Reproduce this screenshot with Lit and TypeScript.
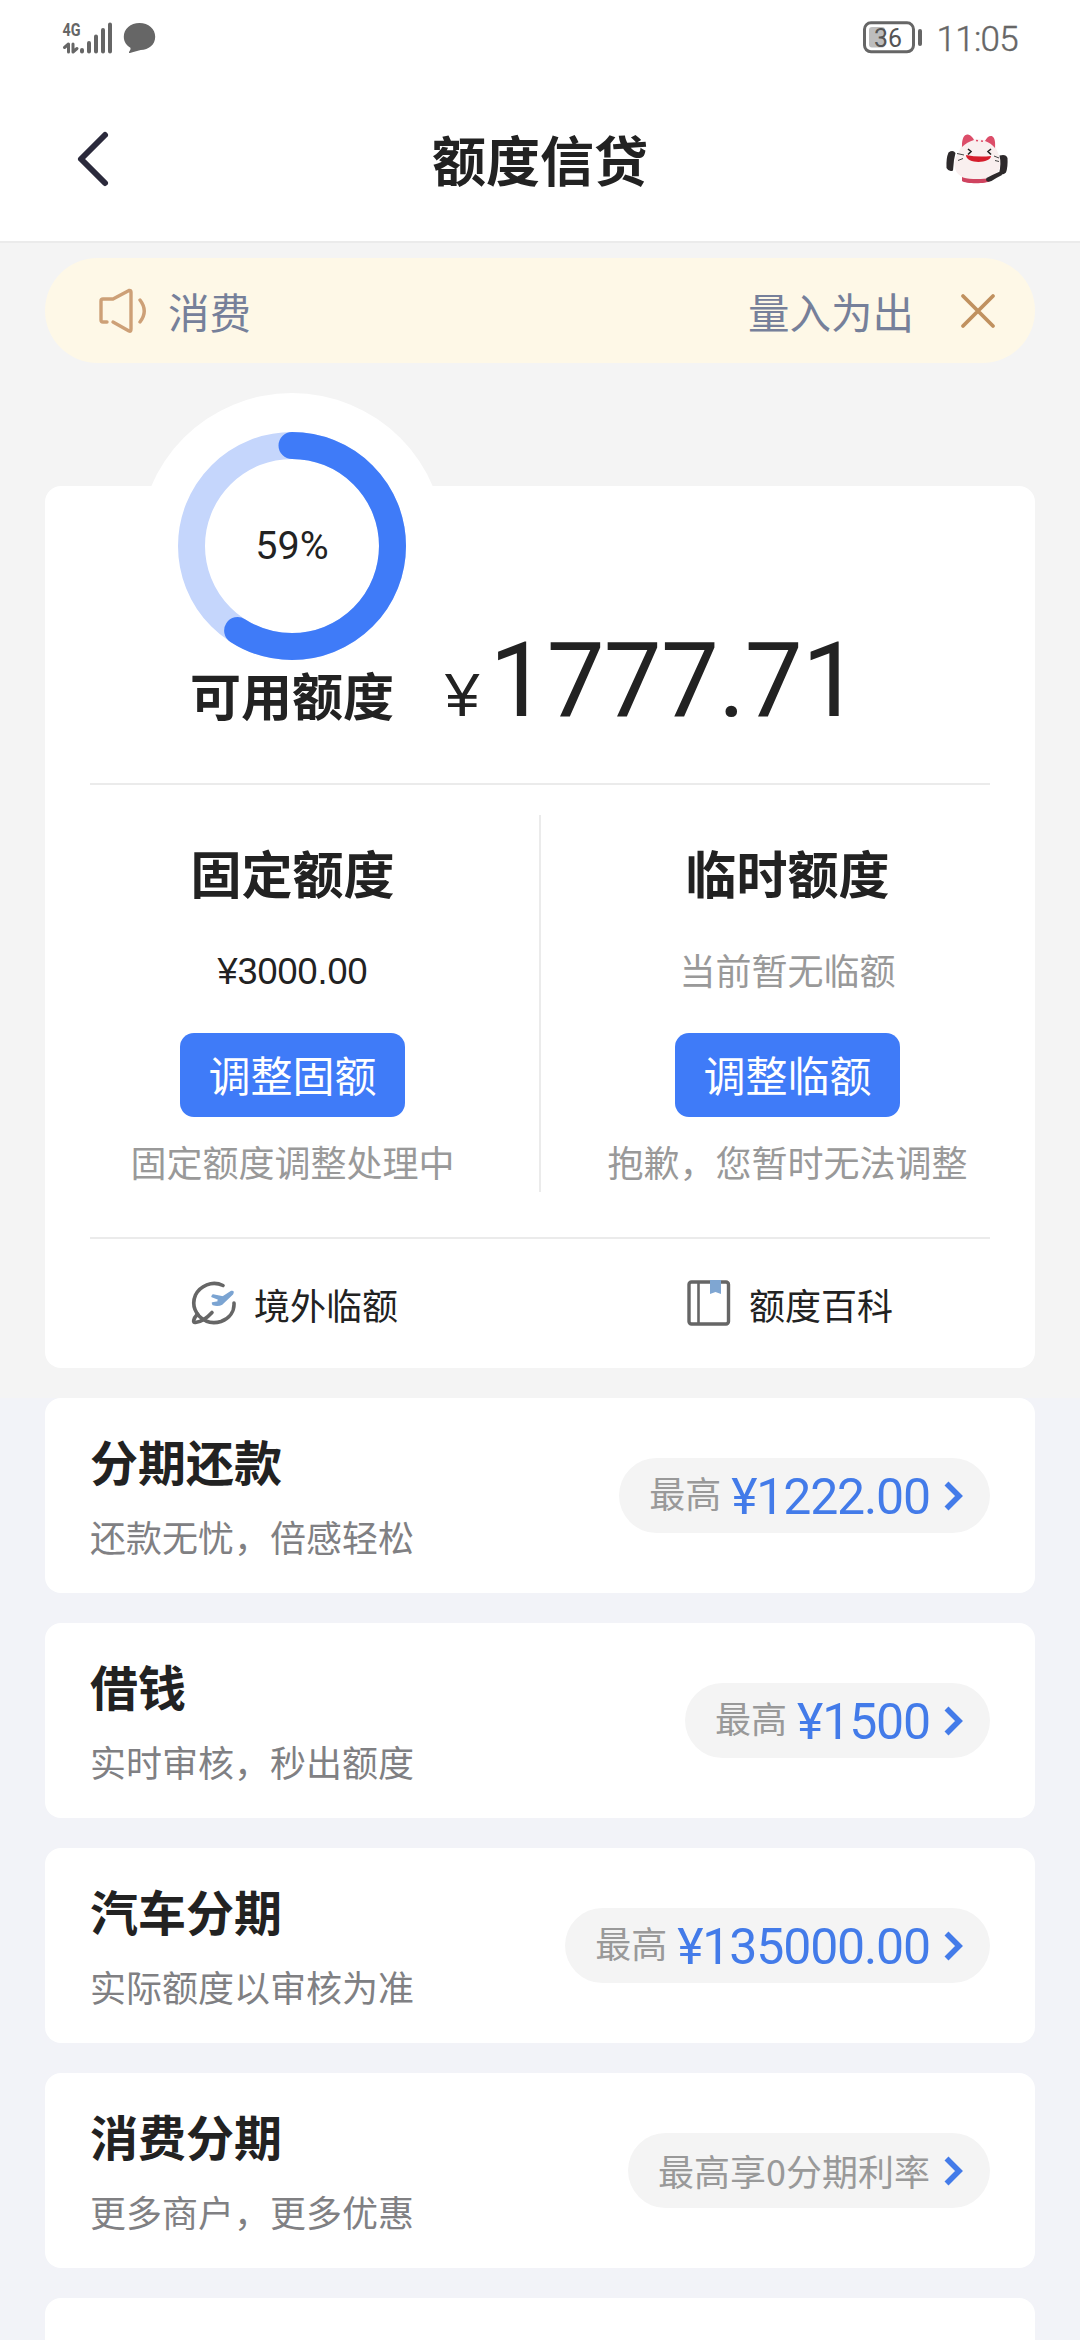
import { LitElement, html, css, nothing } from "lit";
import { customElement, property } from "lit/decorators.js";

interface Offer {
  title: string;
  note: string;
  hint: string;
  amount?: string;
}

const OFFERS: Offer[] = [
  { title: "分期还款", note: "还款无忧，倍感轻松", hint: "最高", amount: "¥1222.00" },
  { title: "借钱", note: "实时审核，秒出额度", hint: "最高", amount: "¥1500" },
  { title: "汽车分期", note: "实际额度以审核为准", hint: "最高", amount: "¥135000.00" },
  { title: "消费分期", note: "更多商户，更多优惠", hint: "最高享0分期利率" },
];

@customElement("status-bar")
class StatusBar extends LitElement {
  static styles = css`
    :host {
      display: flex;
      justify-content: space-between;
      height: 76px;
      padding: 0 62px 0 56px;
      box-sizing: border-box;
      color: #666;
      font-family: Roboto, sans-serif;
    }
    .left { margin-top: 12px; }
    .right { display: flex; margin-top: 20px; gap: 13px; }
    .time {
      font-size: 35px;
      line-height: 39px;
      font-weight: 300;
      letter-spacing: -0.7px;
      -webkit-text-stroke: 0.4px #666;
    }
    svg { display: block; }
    .net { font: 700 19px Roboto, sans-serif; fill: #666; }
    .level { font: 400 26px Roboto, sans-serif; fill: #555; }
  `;
  render() {
    return html`
      <div class="left">
        <svg width="102" height="48" viewBox="56 12 102 48">
          <text class="net" x="62.5" y="36" textLength="18" lengthAdjust="spacingAndGlyphs">4G</text>
          <g stroke="#666" fill="none" stroke-linecap="round" stroke-linejoin="round">
            <path stroke-width="3" d="M68.500 52V44L64.500 47.500M73 44V52L77 48.500" />
            <path stroke-width="4" d="M82 50V51.500M89 43V51.500M96 36.500V51.500M103 30V51.500M110 24.500V51.500" />
          </g>
          <path fill="#666" d="M139.5 23c9 0 15.7 6 15.700 13.800 0 8-6.500 13-14.500 13.200-3.600.8-7.500 2.300-10.700 3-1.100.2-1.300-.7-.7-1.500 1-1.200 1.500-2.400 1.100-3.700-4-2.300-6.600-6-6.600-11C123.800 29 130.500 23 139.500 23z" />
        </svg>
      </div>
      <div class="right">
        <svg width="61" height="36" viewBox="861 20 61 36">
          <rect x="868" y="27" width="16" height="20.500" rx="3" fill="#bdbdbd" />
          <rect x="863.500" y="22.800" width="49" height="29" rx="6.500" fill="none" stroke="#666" stroke-width="3" />
          <rect x="917" y="29" width="4" height="17" rx="2" fill="#666" />
          <text class="level" x="873" y="47" textLength="28" lengthAdjust="spacingAndGlyphs">36</text>
        </svg>
        <span class="time">11:05</span>
      </div>
    `;
  }
}

@customElement("nav-header")
class NavHeader extends LitElement {
  static styles = css`
    :host {
      display: grid;
      grid-template-columns: 200px 1fr 200px;
      align-items: center;
      height: 167px;
      box-sizing: border-box;
      border-bottom: 2px solid #ebebeb;
    }
    .back { margin-left: 76px; display: block; }
    .title {
      margin: 0;
      text-align: center;
      font-size: 54px;
      line-height: 60px;
      font-weight: 700;
      color: #222;
    }
    .mascot { margin-left: 64px; display: block; }
  `;
  render() {
    return html`
      <svg class="back" width="36" height="60" viewBox="76 129 36 60">
        <path d="M105 135L81 159L105 183" fill="none" stroke="#2b2a3c" stroke-width="6" stroke-linecap="round" stroke-linejoin="round" />
      </svg>
      <h1 class="title">额度信贷</h1>
      <svg class="mascot" width="68" height="56" viewBox="944 131 68 56">
        <path d="M962 176h28v5c-3 3-25 3-28 0z" fill="#cf4460" />
        <path d="M963 142Q978 136 994 143C996 149 998 152 1000 158C1002 168 997 176 990 178C982 179.500 970 179.500 963 177.500C954 173 953 164 956 157C959 151 961 148 963 142z" fill="#f9efef" />
        <path d="M962 145C962 139 964 134 968 134.500C971 135 973 138 974 140Q967 142 962 147zM985 141C987 137 990 135 992.500 136.500C995 138 995.500 143 995 148Q991 143 985 141z" fill="#dc4d69" />
        <path d="M966 155q12 2.500 25 1c0 7.500-25 8.500-25-1z" fill="#d51d2c" />
        <path d="M968 149l3 2.500-3 3M991 149l-3 2.500 3 3" fill="none" stroke="#222" stroke-width="1.600" />
        <path d="M964 155l-7-1.500M963 158.500l-5 2M994 156l5 2M995 160.500l4 1" fill="none" stroke="#444" stroke-width="1" />
        <path d="M976 140.500l2 .3M981 141l2 .3" stroke="#dc4d69" stroke-width="1.500" />
        <path d="M948.500 152.500Q953 149.500 955.500 153L954 160L953 170.500Q949 172.500 946.500 168Q946 158 948.500 152.500zM999.500 155.500Q1006 153.500 1007.500 158Q1008 167 1006 172.500Q1002.500 176 999 173.500Q1001.500 164 999.500 155.500zM986.500 178Q992 175 1000 171.500L1002 175Q996 178 991.500 181Q987 183 986 180z" fill="#2d292b" />
      </svg>
    `;
  }
}

@customElement("notice-bar")
class NoticeBar extends LitElement {
  static styles = css`
    :host {
      display: flex;
      align-items: center;
      height: 105px;
      padding: 0 36px 0 52px;
      box-sizing: border-box;
      border-radius: 53px;
      background: #fef8e7;
      color: #76809a;
      font-size: 41.500px;
      line-height: 100px;
    }
    .subject { margin-left: 19px; flex: 1; }
    .advice { margin-right: 43px; }
    svg { display: block; }
  `;
  render() {
    return html`
      <svg width="52" height="50" viewBox="97 286 52 50" fill="none" stroke="#cda077" stroke-width="3.400" stroke-linecap="round" stroke-linejoin="round">
        <path d="M107 322H103Q101 322 101 320V301Q101 299 103 299H113L129 290.500Q131 290 131 292V329Q131 332 129 331L113 322" />
        <path d="M140 300Q148.500 311 140 322" />
      </svg>
      <span class="subject">消费</span>
      <span class="advice">量入为出</span>
      <svg width="42" height="42" viewBox="957 289 42 42">
        <path d="M963 295L993 325M993 295L963 325" stroke="#c0915f" stroke-width="3.800" stroke-linecap="round" />
      </svg>
    `;
  }
}

@customElement("usage-gauge")
class UsageGauge extends LitElement {
  @property({ type: Number }) percent = 0;
  static styles = css`
    :host {
      display: grid;
      place-items: center;
      width: 306px;
      height: 306px;
      border-radius: 50%;
      background: #fff;
    }
    svg, .value { grid-area: 1 / 1; }
    .value {
      font-family: Roboto, sans-serif;
      font-size: 39.500px;
      line-height: 40px;
      color: #222;
    }
  `;
  render() {
    const length = 2 * Math.PI * 100.5;
    return html`
      <svg width="228" height="228" viewBox="-114 -114 228 228" fill="none" stroke-width="27">
        <circle r="100.500" stroke="#c5d6fc" />
        <circle r="100.500" stroke="#3f7bf8" stroke-linecap="round" transform="rotate(-90)"
          stroke-dasharray="${(length * this.percent) / 100} ${length}" />
      </svg>
      <span class="value">${this.percent}%</span>
    `;
  }
}

@customElement("quota-card")
class QuotaCard extends LitElement {
  static styles = css`
    :host {
      display: block;
      position: relative;
      height: 882px;
      border-radius: 16px;
      background: #fff;
      color: #222;
    }
    usage-gauge { position: absolute; left: 94px; top: -93px; }
    .available {
      position: relative;
      display: flex;
      align-items: baseline;
      height: 297px;
      box-sizing: border-box;
      padding: 140px 0 0 145px;
    }
    .label { font-size: 51px; line-height: 60px; font-weight: 700; }
    .yen { margin-left: 51px; font-family: "Liberation Sans", sans-serif; font-size: 62px; line-height: 62px; }
    .amount {
      margin-left: 10px;
      font-family: Roboto, sans-serif;
      font-size: 103px;
      line-height: 110px;
      letter-spacing: -0.700px;
    }
    .rule { height: 2px; margin: 0 45px; background: #ebebeb; }
    .columns {
      display: grid;
      grid-template-columns: 1fr 1fr;
      height: 452px;
      position: relative;
    }
    .column { display: flex; flex-direction: column; align-items: center; padding-top: 57px; }
    .splitter { position: absolute; left: 494px; top: 30px; width: 2px; height: 377px; background: #ebebeb; }
    .info {
      margin-top: 42px;
      font-size: 36px;
      line-height: 50px;
      color: #999;
    }
    .money { font-family: "Liberation Sans", sans-serif; color: #222; margin-top: 45px; margin-bottom: -3px; }
    .button {
      margin-top: 39px;
      width: 225px;
      height: 84px;
      border: 0;
      padding: 0 0 2px;
      border-radius: 14px;
      background: #3f7bf8;
      color: #fff;
      font: 400 42px/80px "Noto Sans CJK SC", sans-serif;
    }
    .state { margin-top: 19px; font-size: 36px; line-height: 50px; color: #999; }
    .links { display: grid; grid-template-columns: 1fr 1fr; height: 129px; }
    .link {
      display: flex;
      align-items: center;
      padding: 0 0 0 145px;
      gap: 16px;
      font-size: 36px;
      line-height: 50px;
    }
    .link svg { display: block; }
  `;
  private column(title: string, info: string, money: boolean, action: string, state: string) {
    return html`
      <div class="column">
        <div class="label">${title}</div>
        <div class="info ${money ? "money" : ""}">${info}</div>
        <button class="button">${action}</button>
        <div class="state">${state}</div>
      </div>
    `;
  }
  render() {
    return html`
      <usage-gauge percent="59"></usage-gauge>
      <div class="available">
        <span class="label">可用额度</span>
        <span class="yen">¥</span>
        <span class="amount">1777.71</span>
      </div>
      <div class="rule"></div>
      <div class="columns">
        ${this.column("固定额度", "¥3000.00", true, "调整固额", "固定额度调整处理中")}
        ${this.column("临时额度", "当前暂无临额", false, "调整临额", "抱歉，您暂时无法调整")}
        <div class="splitter"></div>
      </div>
      <div class="rule"></div>
      <div class="links">
        <div class="link">
          <svg width="48" height="48" viewBox="190 1280 48 48" fill="none" stroke-linecap="round" stroke-linejoin="round">
            <path stroke="#666" stroke-width="3.600" d="M223 1285.500C212 1280 200 1286 195.500 1295C192 1303 194 1310 199 1316C205 1322 213 1324 221 1321.500C230 1318 234.500 1311 234 1303" />
            <path stroke="#666" stroke-width="3.600" d="M197.500 1314C193 1319 192.500 1323 195.500 1322.500C200 1322 207 1318 212 1312.500" />
            <path fill="#7ba4d2" stroke="#7ba4d2" stroke-width="1.500" d="M231.500 1291.500Q234 1291 232.500 1294L222 1304Q218 1306 213 1304.500L212.500 1303L218 1302L218.500 1299L212 1296.500L213 1295L223 1297Z" />
          </svg>
          <span>境外临额</span>
        </div>
        <div class="link">
          <svg width="48" height="48" viewBox="685 1280 48 48" fill="none">
            <rect x="689" y="1282" width="39.500" height="42" rx="2.500" stroke="#666" stroke-width="3.400" />
            <path stroke="#666" stroke-width="2.600" d="M698.500 1282V1324" />
            <path fill="#7fa6d2" d="M710 1280H721V1294L715.500 1292L710 1294Z" />
          </svg>
          <span>额度百科</span>
        </div>
      </div>
    `;
  }
}

@customElement("offer-row")
class OfferRow extends LitElement {
  @property({ attribute: false }) offer?: Offer;
  static styles = css`
    :host {
      display: flex;
      align-items: center;
      justify-content: space-between;
      flex: none;
      height: 195px;
      padding: 0 45px;
      box-sizing: border-box;
      border-radius: 16px;
      background: #fff;
    }
    .text { display: flex; flex-direction: column; gap: 21px; padding-bottom: 1px; }
    .title { font-size: 48px; line-height: 60px; font-weight: 700; color: #222; }
    .note { font-size: 36px; line-height: 50px; color: #808083; }
    .pill {
      display: flex;
      align-items: center;
      height: 75px;
      padding: 0 26px 0 30px;
      border-radius: 38px;
      background: #f4f4f4;
      box-sizing: border-box;
    }
    .hint { font-size: 36px; line-height: 60px; color: #999; padding-bottom: 8px; }
    .hint.wide { padding-bottom: 2px; }
    .amount {
      margin-left: 10px;
      font-family: Roboto, sans-serif;
      font-size: 50px;
      line-height: 70px;
      letter-spacing: -1.150px;
      color: #437be9;
      padding-top: 3px;
    }
    .chevron { margin-left: 12px; display: block; }
  `;
  render() {
    const o = this.offer;
    if (!o) return nothing;
    return html`
      <div class="text">
        <div class="title">${o.title}</div>
        <div class="note">${o.note}</div>
      </div>
      <div class="pill">
        <span class="hint ${o.amount ? "" : "wide"}">${o.hint}</span>
        ${o.amount ? html`<span class="amount">${o.amount}</span>` : nothing}
        <svg class="chevron" width="22" height="32" viewBox="0 0 22 32">
          <path d="M4.500 3.500L17 16L4.500 28.500" fill="none" stroke="#437be9" stroke-width="5.600" />
        </svg>
      </div>
    `;
  }
}

@customElement("app-root")
class AppRoot extends LitElement {
  static styles = css`
    :host {
      display: flex;
      flex-direction: column;
      width: 1080px;
      height: 2340px;
      overflow: hidden;
      background: #f2f3f8;
      font-family: "Noto Sans CJK SC", sans-serif;
    }
    .head { background: #fff; }
    .top {
      display: flex;
      flex-direction: column;
      gap: 123px;
      padding: 15px 45px 30px;
      background: #f4f4f4;
    }
    .offers { display: flex; flex-direction: column; gap: 30px; padding: 0 45px; }
    .next { flex: none; height: 195px; border-radius: 16px; background: #fff; }
  `;
  render() {
    return html`
      <div class="head">
        <status-bar></status-bar>
        <nav-header></nav-header>
      </div>
      <div class="top">
        <notice-bar></notice-bar>
        <quota-card></quota-card>
      </div>
      <div class="offers">
        ${OFFERS.map((o) => html`<offer-row .offer=${o}></offer-row>`)}
        <div class="next"></div>
      </div>
    `;
  }
}
